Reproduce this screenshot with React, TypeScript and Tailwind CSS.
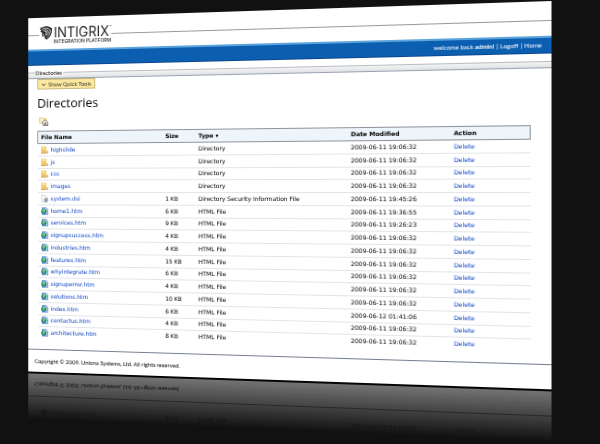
type FileKind = 'folder' | 'config' | 'html';

interface Entry {
  name: string;
  kind: FileKind;
  size: string;
  type: string;
  modified: string;
}

const dir = (name: string): Entry => ({
  name,
  kind: 'folder',
  size: '',
  type: 'Directory',
  modified: '2009-06-11 19:06:32',
});

const html = (name: string, size: string, modified = '2009-06-11 19:06:32'): Entry => ({
  name,
  kind: 'html',
  size,
  type: 'HTML File',
  modified,
});

const entries: Entry[] = [
  dir('highslide'),
  dir('js'),
  dir('css'),
  dir('images'),
  {
    name: 'system.dsi',
    kind: 'config',
    size: '1 KB',
    type: 'Directory Security Information File',
    modified: '2009-06-11 19:45:26',
  },
  html('home1.htm', '6 KB', '2009-06-11 19:36:55'),
  html('services.htm', '9 KB', '2009-06-11 19:26:23'),
  html('signupsuccess.htm', '4 KB'),
  html('industries.htm', '4 KB'),
  html('features.htm', '15 KB'),
  html('whyintegrate.htm', '6 KB'),
  html('signuperror.htm', '4 KB'),
  html('solutions.htm', '10 KB'),
  html('index.htm', '6 KB', '2009-06-12 01:41:06'),
  html('contactus.htm', '4 KB'),
  html('architecture.htm', '8 KB'),
];

function FileIcon({ kind }: { kind: FileKind }) {
  if (kind === 'folder') {
    return (
      <svg viewBox="0 0 16 16" className="size-2 shrink-0" aria-hidden="true">
        <path d="M0 1h12v14H0z" fill="#f6cb62" />
        <path d="M1 2h4v5H1zM6 3h4v5H6z" fill="#fbe3a0" />
        <path d="M4 7h8v8H4z" fill="#f5c45a" />
        <path d="M0 14h12v1.500H0z" fill="#cf9a33" />
        <path d="M13 11h2.500v4H13z" fill="#6f7f9c" />
      </svg>
    );
  }
  if (kind === 'config') {
    return (
      <svg viewBox="0 0 16 16" className="size-2 shrink-0" aria-hidden="true">
        <path d="M1.500 1h8l4 4v10h-12z" fill="#fff" stroke="#a5abb5" />
        <circle cx="11" cy="10.500" r="3.500" fill="#d5d8dd" stroke="#4b525e" strokeWidth="1.500" />
        <circle cx="11" cy="10.500" r="1" fill="#444" />
      </svg>
    );
  }
  return (
    <svg viewBox="0 0 16 16" className="size-2 shrink-0" aria-hidden="true">
      <path d="M3 .500h8l4 4v11H3z" fill="#dcebfb" stroke="#3f78c4" strokeWidth="1.500" />
      <circle cx="6.500" cy="8.500" r="6" fill="#2b74b8" />
      <path d="M2 7c2-4 7-5 8-2s-2 3-2 5-3 4-4 1 0-2-2-4z" fill="#5cc046" />
      <path d="M5 5l3-1-1 3-2 1z" fill="#b4e48c" />
      <path d="M9 10l3-1-1 3-3 1z" fill="#2e8a3a" />
    </svg>
  );
}

function LogoMark() {
  return (
    <svg viewBox="0 0 28 30" className="h-4 w-[15px] shrink-0" aria-hidden="true">
      <path
        d="M1 4c5 2 8-2 13-2s9 3 12 4c1 10-2 17-11 22l-4-3 1-3-5 0-2-5 2-2-5-3 3-1-4-4 3 0z"
        fill="#23262b"
      />
      <path
        d="M6 8c4-3 12-3 16 1M23 9c0 7-2 11-7 15M8 11c2-2 9-3 11 1 1 4-2 7-6 7"
        fill="none"
        stroke="#fff"
        strokeWidth="1.500"
      />
      <path d="M11 12l5 1-3 4 3 1M7 16l4 6" fill="none" stroke="#fff" strokeWidth="1.500" />
    </svg>
  );
}

function Masthead() {
  return (
    <header>
      <div className="flex h-[33px] items-start">
        <div className="mt-[18px] h-px w-3 bg-[#9a9a9a]" />
        <div className="mt-2 flex items-start">
          <LogoMark />
          <div className="ml-px flex flex-col text-[#25272b]">
            <span className="flex items-start font-[Inter,sans-serif] text-[14px] leading-[15px]">
              INTIGRIX
              <span className="text-[4px] leading-[8px]">™</span>
            </span>
            <span className="font-[Inter,sans-serif] text-[5px] leading-[5px] font-medium">
              INTEGRATION PLATFORM
            </span>
          </div>
        </div>
        <div className="mt-[18px] h-px flex-1 bg-[#9a9a9a]" />
      </div>
      <nav className="flex h-[17px] items-center justify-end gap-[2px] border-t-2 border-b border-t-[#5ba4dc] border-b-[#0a4690] bg-[#0c5fb0] pr-[9px] text-[6px] leading-[8px] text-white">
        <span>
          welcome back <b>admin!</b>
        </span>
        <span>|</span>
        <a href="#logoff">Logoff</a>
        <span>|</span>
        <a href="#home">Home</a>
      </nav>
    </header>
  );
}

function Breadcrumb() {
  return (
    <div className="mt-[7px] flex h-[7px] items-start border-t border-b border-t-[#b9bdc4] border-b-[#9ba3b2] bg-linear-to-b from-[#f4f4f5] to-[#dfe1e4]">
      <span className="-mt-[3px] ml-[7px] bg-[#fafafa] px-px text-[6px] leading-[6px] text-black">
        Directories
      </span>
    </div>
  );
}

function FileTable() {
  return (
    <table className="h-[217px] w-full table-fixed border-collapse text-left font-['DejaVu_Sans',Verdana,sans-serif] text-[6px] leading-[8px] text-black">
      <colgroup>
        <col className="w-[27%]" />
        <col className="w-[7%]" />
        <col className="w-[31%]" />
        <col className="w-[20%]" />
        <col className="w-[15%]" />
      </colgroup>
      <thead>
        <tr className="h-[13px] border border-[#8d939c] bg-[#eef5fa] text-black">
          <th className="px-[3px] py-0">File Name</th>
          <th className="px-[3px] py-0">Size</th>
          <th className="px-[3px] py-0">Type ▾</th>
          <th className="px-[3px] py-0">Date Modified</th>
          <th className="px-[3px] py-0">Action</th>
        </tr>
      </thead>
      <tbody>
        {entries.map((entry) => (
          <tr key={entry.name} className="border-b border-[#e3e5e8] last:border-b-0">
            <td className="px-[3px] py-0">
              <div className="flex items-center gap-[3px]">
                <FileIcon kind={entry.kind} />
                <a href={`#${entry.name}`} className="text-[#0f44c4]">
                  {entry.name}
                </a>
              </div>
            </td>
            <td className="px-[3px] py-0 whitespace-nowrap">{entry.size}</td>
            <td className="px-[3px] py-0 whitespace-nowrap">{entry.type}</td>
            <td className="px-[3px] py-0 whitespace-nowrap">{entry.modified}</td>
            <td className="px-[3px] py-0">
              <a href={`#delete-${entry.name}`} className="text-[#0f44c4]">
                Delete
              </a>
            </td>
          </tr>
        ))}
      </tbody>
    </table>
  );
}

export default function App() {
  return (
    <div className="min-h-screen overflow-hidden bg-[#111] font-[Lato,sans-serif]">
      <div className="mr-[60px] ml-[15px] pt-[10px] perspective-[580px] perspective-origin-[50%_191px]">
        <div className="rotate-y-[-6deg] border-b border-black bg-white [-webkit-box-reflect:below_0_linear-gradient(to_bottom,transparent_87%,rgba(255,255,255,0.42)_100%)]">
          <Masthead />
          <Breadcrumb />
          <main className="pr-[19px] pl-[10px]">
            <button
              type="button"
              className="flex h-[11px] items-center gap-[3px] border border-[#c9b878] bg-[#fbe7a0] px-[4px] text-[6px] leading-[8px] text-[#3a3528]"
            >
              <svg viewBox="0 0 8 8" className="size-1" aria-hidden="true">
                <path d="M0 2l4 4 4-4" fill="none" stroke="#4a4433" strokeWidth="2" />
              </svg>
              Show Quick Tools
            </button>
            <h1 className="mt-[5px] font-['Open_Sans','Noto_Sans',sans-serif] text-[13px] leading-[18px] text-black">
              Directories
            </h1>
            <a
              href="#up"
              aria-label="Up to home directory"
              className="mt-[5px] mb-[5px] ml-[2px] block h-[10px] w-[10px]"
            >
              <svg viewBox="0 0 20 20" className="size-[10px]" aria-hidden="true">
                <path d="M1 3h6l1 2h8v9H1z" fill="#fbedc0" stroke="#d9ab48" />
                <path d="M7 13l6-6 6 6v6H9z" fill="#f0f0f0" stroke="#444" strokeWidth="1.500" />
                <path d="M12 13h3v5h-3z" fill="#8a3a30" />
              </svg>
            </a>
            <FileTable />
          </main>
          <footer className="mt-[11px] flex h-6 items-center border-t border-[#75808f] pl-[7px] text-[6px] leading-[8px] text-black">
            Copyright © 2009. Uniona Systems, Ltd. All rights reserved.
          </footer>
        </div>
      </div>
    </div>
  );
}
